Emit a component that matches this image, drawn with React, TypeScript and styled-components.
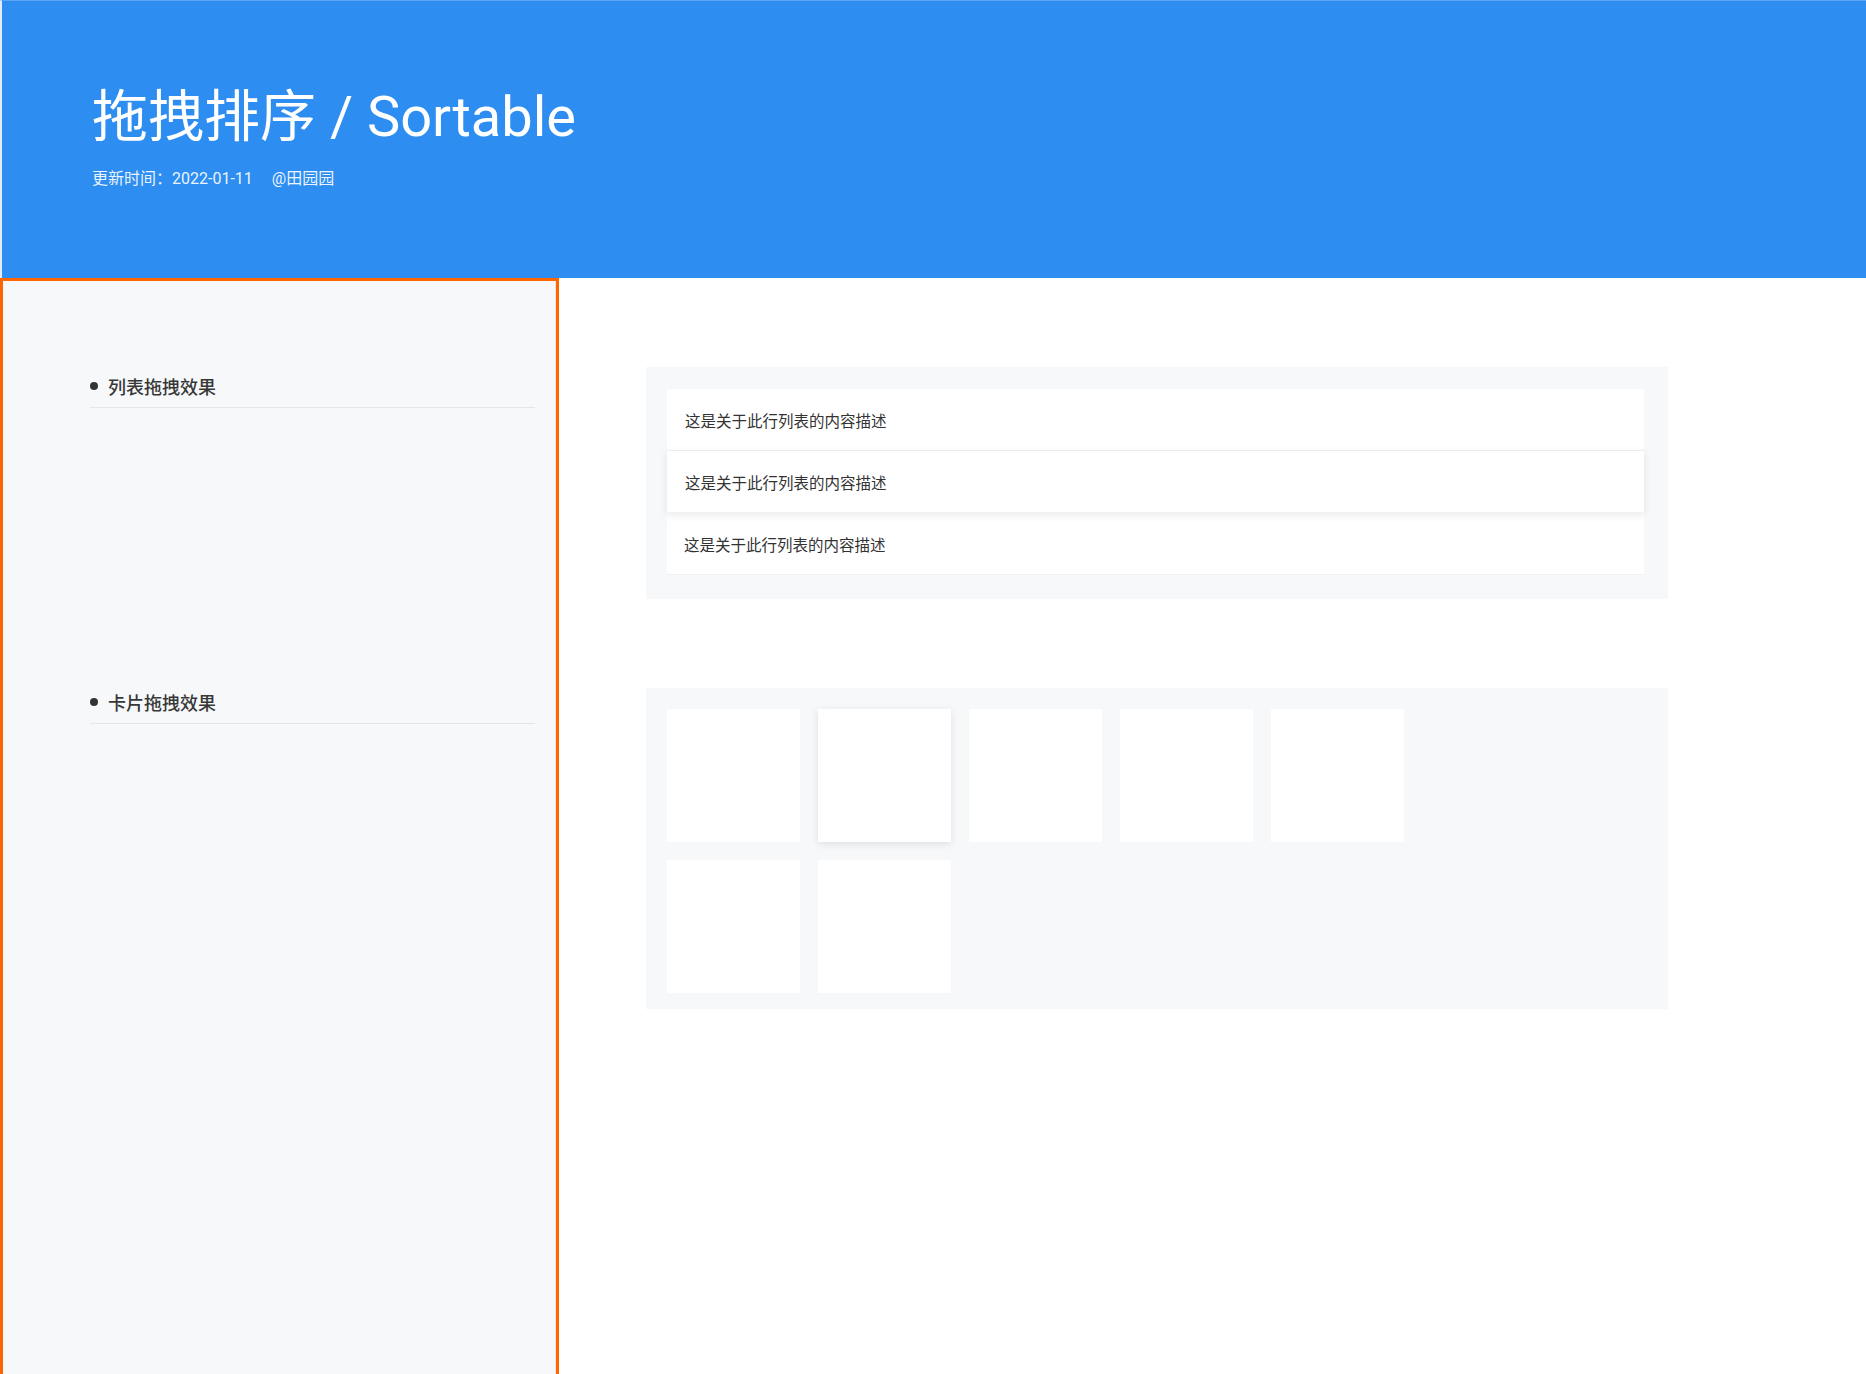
import React from "react";
import styled, { createGlobalStyle } from "styled-components";

const GlobalStyle = createGlobalStyle`
  * { box-sizing: border-box; }
  html, body { margin: 0; padding: 0; background: #ffffff; }
  body {
    font-family: "Roboto", "Noto Sans CJK SC", sans-serif;
    color: #333333;
  }
`;

const Page = styled.div`
  display: flex;
  flex-direction: column;
  min-height: 1374px;
  width: 1866px;
`;

const Header = styled.header`
  height: 278px;
  background: #2e8df0;
  border-top: 1px solid #5aa6f5;
  border-left: 2px solid #e3edf9;
  padding: 78px 0 0 90px;
  display: flex;
  flex-direction: column;
`;

const Title = styled.h1`
  margin: 0;
  font-family: "Roboto", "Noto Sans CJK SC", sans-serif;
  font-weight: 400;
  font-size: 56px;
  line-height: 76px;
  color: #ffffff;
  letter-spacing: 0;
`;

const Meta = styled.div`
  margin-top: 13px;
  display: flex;
  gap: 19px;
  font-family: "Roboto", "Noto Sans CJK SC", sans-serif;
  font-size: 16px;
  line-height: 22px;
  color: rgba(255, 255, 255, 0.92);
`;

const Body = styled.div`
  flex: 1;
  display: flex;
`;

const Sidebar = styled.aside`
  width: 559px;
  flex: none;
  background: #f7f8fa;
  border: 3px solid #ff6600;
  border-bottom: none;
  box-shadow: inset -1px 0 0 #e2e4e8;
  padding: 93px 21px 0 87px;
  display: flex;
  flex-direction: column;
  gap: 282px;
`;

const SectionTitle = styled.div`
  display: flex;
  align-items: center;
  gap: 10px;
  height: 34px;
  padding-bottom: 10px;
  border-bottom: 1px solid #e4e6ea;
  font-family: "Noto Sans CJK SC", sans-serif;
  font-size: 18px;
  font-weight: 500;
  line-height: 24px;
  color: #383838;
`;

const Dot = styled.span`
  width: 8px;
  height: 8px;
  border-radius: 50%;
  background: #333333;
  flex: none;
`;

const Main = styled.main`
  flex: 1;
  padding: 89px 0 0 87px;
  display: flex;
  flex-direction: column;
  gap: 89px;
`;

const ListPanel = styled.div`
  width: 1022px;
  background: #f7f8fa;
  padding: 22px 24px 24px 21px;
  display: flex;
  flex-direction: column;
`;

const ListItem = styled.div<{ $lifted?: boolean; $shift?: number }>`
  height: 62px;
  display: flex;
  align-items: center;
  padding-left: ${(p) => 18 - (p.$shift ?? 0)}px;
  background: #ffffff;
  font-family: "Noto Sans CJK SC", sans-serif;
  font-size: 15.5px;
  color: #333333;
  border-bottom: 1px solid #f0f1f3;
  position: relative;
  z-index: ${(p) => (p.$lifted ? 1 : 0)};
  box-shadow: ${(p) =>
    p.$lifted ? "0 2px 8px rgba(0, 0, 0, 0.09)" : "none"};
`;

const CardPanel = styled.div`
  width: 1022px;
  background: #f7f8fa;
  padding: 21px 21px 16px 21px;
  display: flex;
  flex-wrap: wrap;
  gap: 18px;
  align-content: flex-start;
`;

const Card = styled.div<{ $lifted?: boolean }>`
  width: 133px;
  height: 133px;
  background: #ffffff;
  box-shadow: ${(p) =>
    p.$lifted ? "0 2px 8px rgba(0, 0, 0, 0.1)" : "none"};
`;

const CardRow = styled.div`
  display: flex;
  gap: 18px;
  width: 100%;
`;

export default function App() {
  const items = [
    { lifted: false, shift: 0 },
    { lifted: true, shift: 0 },
    { lifted: false, shift: 1 },
  ];
  return (
    <>
      <GlobalStyle />
      <Page>
        <Header>
          <Title>拖拽排序 / Sortable</Title>
          <Meta>
            <span>更新时间：2022-01-11</span>
            <span>@田园园</span>
          </Meta>
        </Header>
        <Body>
          <Sidebar>
            <SectionTitle>
              <Dot />
              列表拖拽效果
            </SectionTitle>
            <SectionTitle>
              <Dot />
              卡片拖拽效果
            </SectionTitle>
          </Sidebar>
          <Main>
            <ListPanel>
              {items.map((it, i) => (
                <ListItem key={i} $lifted={it.lifted} $shift={it.shift}>
                  这是关于此行列表的内容描述
                </ListItem>
              ))}
            </ListPanel>
            <CardPanel>
              <CardRow>
                <Card />
                <Card $lifted />
                <Card />
                <Card />
                <Card />
              </CardRow>
              <CardRow>
                <Card />
                <Card />
              </CardRow>
            </CardPanel>
          </Main>
        </Body>
      </Page>
    </>
  );
}
